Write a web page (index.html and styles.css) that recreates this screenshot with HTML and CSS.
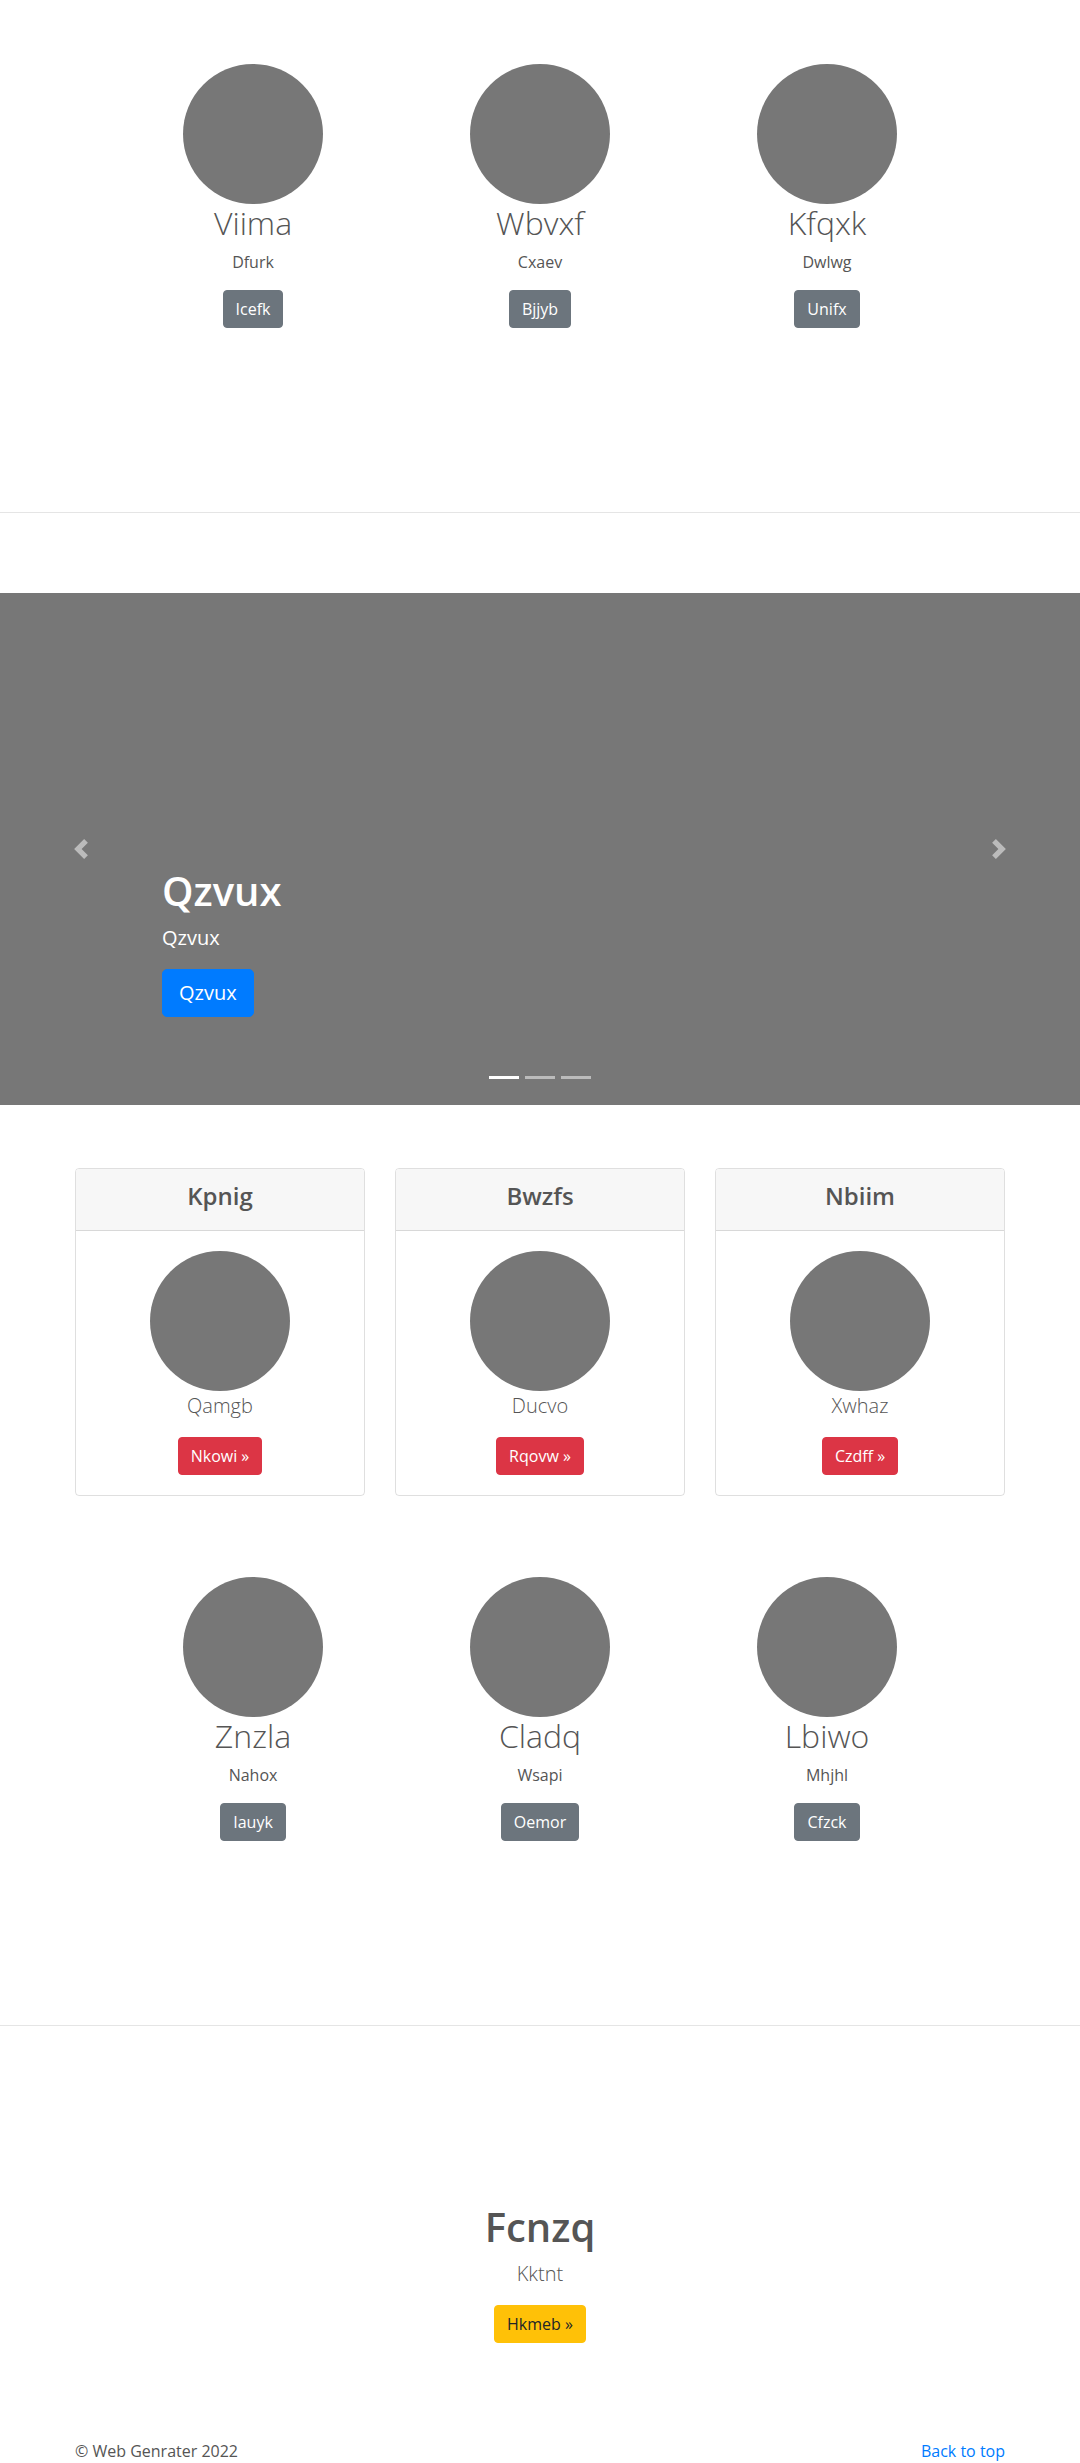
FILE: index.html
```html
<!DOCTYPE html>
<html lang="en">
<head>
<meta charset="utf-8">
<title>Web Genrater</title>
<link rel="stylesheet" href="styles.css">
</head>
<body>
<section class="marketing marketing-top">
  <div class="feature-row">
    <div class="feature">
      <svg class="avatar" width="140" height="140" viewBox="0 0 140 140"><circle cx="70" cy="70" r="70" fill="#777"/></svg>
      <h2 class="feature-title">Viima</h2>
      <p class="feature-text">Dfurk</p>
      <a class="btn btn-secondary" href="#">Icefk</a>
    </div>
    <div class="feature">
      <svg class="avatar" width="140" height="140" viewBox="0 0 140 140"><circle cx="70" cy="70" r="70" fill="#777"/></svg>
      <h2 class="feature-title">Wbvxf</h2>
      <p class="feature-text">Cxaev</p>
      <a class="btn btn-secondary" href="#">Bjjyb</a>
    </div>
    <div class="feature">
      <svg class="avatar" width="140" height="140" viewBox="0 0 140 140"><circle cx="70" cy="70" r="70" fill="#777"/></svg>
      <h2 class="feature-title">Kfqxk</h2>
      <p class="feature-text">Dwlwg</p>
      <a class="btn btn-secondary" href="#">Unifx</a>
    </div>
  </div>
</section>

<hr class="divider">

<div class="carousel">
  <a class="carousel-control control-prev" href="#" aria-label="Previous">
    <svg width="20" height="20" viewBox="0 0 8 8"><path fill="#fff" d="M5.25 0l-4 4 4 4 1.5-1.5L4.25 4l2.5-2.5L5.25 0z"/></svg>
  </a>
  <div class="carousel-caption">
    <h1 class="caption-title">Qzvux</h1>
    <p class="caption-text">Qzvux</p>
    <a class="btn btn-lg btn-primary" href="#">Qzvux</a>
  </div>
  <a class="carousel-control control-next" href="#" aria-label="Next">
    <svg width="20" height="20" viewBox="0 0 8 8"><path fill="#fff" d="M2.75 0l-1.5 1.5L3.75 4l-2.5 2.5L2.75 8l4-4-4-4z"/></svg>
  </a>
  <div class="indicators">
    <span class="indicator active"></span>
    <span class="indicator"></span>
    <span class="indicator"></span>
  </div>
</div>

<section class="pricing">
  <div class="card-grid">
    <div class="card">
      <div class="card-header"><h4 class="card-title">Kpnig</h4></div>
      <div class="card-body">
        <svg class="avatar" width="140" height="140" viewBox="0 0 140 140"><circle cx="70" cy="70" r="70" fill="#777"/></svg>
        <p class="lead">Qamgb</p>
        <a class="btn btn-danger" href="#">Nkowi »</a>
      </div>
    </div>
    <div class="card">
      <div class="card-header"><h4 class="card-title">Bwzfs</h4></div>
      <div class="card-body">
        <svg class="avatar" width="140" height="140" viewBox="0 0 140 140"><circle cx="70" cy="70" r="70" fill="#777"/></svg>
        <p class="lead">Ducvo</p>
        <a class="btn btn-danger" href="#">Rqovw »</a>
      </div>
    </div>
    <div class="card">
      <div class="card-header"><h4 class="card-title">Nbiim</h4></div>
      <div class="card-body">
        <svg class="avatar" width="140" height="140" viewBox="0 0 140 140"><circle cx="70" cy="70" r="70" fill="#777"/></svg>
        <p class="lead">Xwhaz</p>
        <a class="btn btn-danger" href="#">Czdff »</a>
      </div>
    </div>
  </div>
</section>

<section class="marketing marketing-bottom">
  <div class="feature-row">
    <div class="feature">
      <svg class="avatar" width="140" height="140" viewBox="0 0 140 140"><circle cx="70" cy="70" r="70" fill="#777"/></svg>
      <h2 class="feature-title">Znzla</h2>
      <p class="feature-text">Nahox</p>
      <a class="btn btn-secondary" href="#">Iauyk</a>
    </div>
    <div class="feature">
      <svg class="avatar" width="140" height="140" viewBox="0 0 140 140"><circle cx="70" cy="70" r="70" fill="#777"/></svg>
      <h2 class="feature-title">Cladq</h2>
      <p class="feature-text">Wsapi</p>
      <a class="btn btn-secondary" href="#">Oemor</a>
    </div>
    <div class="feature">
      <svg class="avatar" width="140" height="140" viewBox="0 0 140 140"><circle cx="70" cy="70" r="70" fill="#777"/></svg>
      <h2 class="feature-title">Lbiwo</h2>
      <p class="feature-text">Mhjhl</p>
      <a class="btn btn-secondary" href="#">Cfzck</a>
    </div>
  </div>
</section>

<hr class="divider">

<section class="hero">
  <h1 class="hero-title">Fcnzq</h1>
  <p class="lead">Kktnt</p>
  <a class="btn btn-warning" href="#">Hkmeb »</a>
</section>

<footer class="footer">
  <p class="footer-copy">© Web Genrater 2022</p>
  <a class="footer-link" href="#">Back to top</a>
</footer>
</body>
</html>
```

FILE: styles.css
```css
* { box-sizing: border-box; }

body {
  margin: 0;
  font-family: "Open Sans", "Noto Sans", sans-serif;
  font-size: 16px;
  line-height: 24px;
  color: #555;
  background: #fff;
}

.avatar { display: block; }

/* Buttons */
.btn {
  display: inline-block;
  padding: 6px 12px;
  font-size: 16px;
  line-height: 24px;
  border: 1px solid transparent;
  border-radius: 4px;
  text-decoration: none;
  font-weight: 400;
}
.btn-lg {
  padding: 8px 16px;
  font-size: 20px;
  line-height: 30px;
  border-radius: 5px;
}
.btn-secondary { background: #6c757d; border-color: #6c757d; color: #fff; }
.btn-primary { background: #007bff; border-color: #007bff; color: #fff; }
.btn-danger { background: #dc3545; border-color: #dc3545; color: #fff; }
.btn-warning { background: #ffc107; border-color: #ffc107; color: #212529; }

/* Marketing rows */
.marketing-top { padding: 64px 0 184px; }
.marketing-bottom { padding: 0 0 184px; }

.feature-row {
  display: grid;
  grid-template-columns: repeat(3, 287px);
  justify-content: center;
}
.feature {
  display: flex;
  flex-direction: column;
  align-items: center;
  text-align: center;
}
.feature-title {
  margin: 0 0 8px;
  font-size: 32px;
  line-height: 38px;
  font-weight: 350;
}
.feature-text { margin: 0 0 16px; }

.divider {
  margin: 0;
  border: 0;
  border-top: 1px solid #e5e5e5;
  height: 0;
}

/* Carousel */
.carousel {
  position: relative;
  margin-top: 80px;
  height: 512px;
  background: #777;
}
.carousel-control {
  position: absolute;
  top: 0;
  bottom: 0;
  width: 15%;
  display: flex;
  align-items: center;
  justify-content: center;
  opacity: 0.5;
}
.control-prev { left: 0; }
.control-next { right: 0; }

.carousel-caption {
  position: absolute;
  left: 15%;
  right: 15%;
  bottom: 88px;
  display: flex;
  flex-direction: column;
  align-items: flex-start;
  color: #fff;
}
.caption-title {
  margin: 0 0 8px;
  font-size: 40px;
  line-height: 48px;
  font-weight: 600;
}
.caption-text {
  margin: 0 0 16px;
  font-size: 20px;
  line-height: 30px;
}

.indicators {
  position: absolute;
  left: 0;
  right: 0;
  bottom: 26px;
  display: flex;
  justify-content: center;
  gap: 6px;
}
.indicator {
  display: block;
  width: 30px;
  height: 3px;
  background: rgba(255, 255, 255, 0.5);
}
.indicator.active { background: #fff; }

/* Pricing cards */
.pricing { padding: 63px 0 81px; }
.card-grid {
  width: 930px;
  margin: 0 auto;
  display: grid;
  grid-template-columns: repeat(3, 1fr);
  gap: 30px;
}
.card {
  border: 1px solid rgba(0, 0, 0, 0.125);
  border-radius: 4px;
  text-align: center;
  overflow: hidden;
}
.card-header {
  padding: 12px 20px;
  background: #f7f7f7;
  border-bottom: 1px solid rgba(0, 0, 0, 0.125);
}
.card-title {
  margin: 0 0 8px;
  font-size: 24px;
  line-height: 29px;
  font-weight: 600;
}
.card-body {
  padding: 20px;
  display: flex;
  flex-direction: column;
  align-items: center;
}

.lead {
  margin: 0 0 16px;
  font-size: 20px;
  line-height: 30px;
  font-weight: 300;
}

/* Hero */
.hero {
  padding-top: 177px;
  display: flex;
  flex-direction: column;
  align-items: center;
  text-align: center;
}
.hero-title {
  margin: 0 0 8px;
  font-size: 40px;
  line-height: 48px;
  font-weight: 600;
}

/* Footer */
.footer {
  width: 930px;
  margin: 0 auto;
  padding: 96px 0 48px;
  display: flex;
  justify-content: space-between;
}
.footer-copy { margin: 0; }
.footer-link { color: #007bff; text-decoration: none; }
```
